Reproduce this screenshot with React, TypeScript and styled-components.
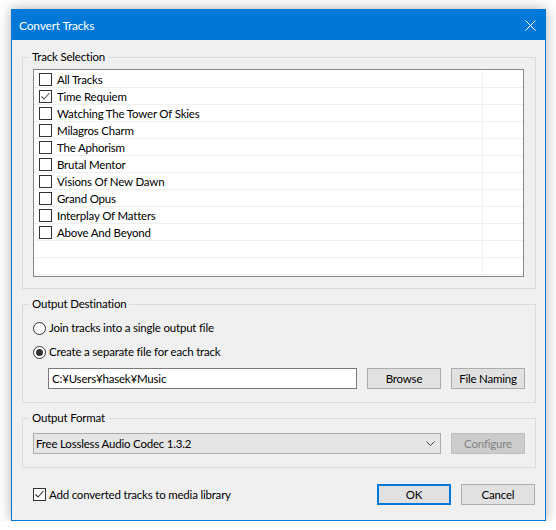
import React from 'react';
import styled, { createGlobalStyle } from 'styled-components';

const GlobalStyle = createGlobalStyle`
  html, body { margin: 0; padding: 0; background: #ffffff; }
  body {
    font-family: Lato, "Noto Sans", "Liberation Sans", sans-serif;
    font-size: 11.5px;
    letter-spacing: -0.2px;
    color: #000;
  }
  * { box-sizing: border-box; }
`;

const Page = styled.div`
  padding: 9px 0 0 11px;
`;

const Window = styled.div`
  width: 535px;
  height: 512px;
  border: 1px solid #0078d7;
  background: #f0f0f0;
  box-shadow: 0 0 12px rgba(0, 0, 0, 0.32);
  display: flex;
  flex-direction: column;
`;

const TitleBar = styled.div`
  height: 30px;
  background: #0078d7;
  color: #fff;
  display: flex;
  align-items: center;
  justify-content: space-between;
  padding: 1px 9px 0 7px;
  font-size: 12px;
`;

const Content = styled.div`
  display: flex;
  flex-direction: column;
  padding: 0 9px 0 10px;
`;

const Group = styled.div<{ $mt: number; $pad: string }>`
  position: relative;
  margin-top: ${(p) => p.$mt}px;
  border: 1px solid #dcdcdc;
  padding: ${(p) => p.$pad};
`;

const Caption = styled.span`
  position: absolute;
  top: -9px;
  left: 6px;
  padding: 0 3px;
  background: #f0f0f0;
  line-height: 16px;
  white-space: nowrap;
`;

const ListBox = styled.div`
  height: 208px;
  border: 1px solid #828790;
  background: #fff;
  padding-top: 1px;
  overflow: hidden;
`;

const Row = styled.div`
  display: grid;
  grid-template-columns: 449px 1fr;
  height: 17px;
  border-bottom: 1px solid #f0f0f0;
`;

const NameCell = styled.div`
  display: flex;
  align-items: center;
  gap: 5px;
  padding-left: 5px;
  border-right: 1px solid #f0f0f0;
  line-height: 16px;
  white-space: nowrap;
`;

const RowText = styled.span`
  padding-top: 1px;
`;

const Box = styled.span`
  width: 13px;
  height: 13px;
  flex: none;
  border: 1px solid #333;
  background: #fff;
  display: inline-flex;
  align-items: center;
  justify-content: center;
`;

const RadioRow = styled.label`
  display: flex;
  align-items: center;
  gap: 3px;
  height: 24px;
  line-height: 16px;
`;

const RadioCircle = styled.span<{ $on?: boolean }>`
  width: 13px;
  height: 13px;
  flex: none;
  border: 1px solid #333;
  border-radius: 50%;
  background: #fff;
  display: inline-flex;
  align-items: center;
  justify-content: center;
  &::after {
    content: '';
    width: 7px;
    height: 7px;
    border-radius: 50%;
    background: ${(p) => (p.$on ? '#333' : 'transparent')};
  }
`;

const PathRow = styled.div`
  display: flex;
  align-items: center;
  margin-top: 4px;
  padding-left: 15px;
  gap: 10px;
`;

const PathField = styled.div`
  width: 309px;
  height: 21px;
  border: 1px solid #7a7a7a;
  background: #fff;
  padding-left: 3px;
  display: flex;
  align-items: center;
  line-height: 16px;
`;

const Button = styled.div<{ $w?: number; $default?: boolean; $disabled?: boolean }>`
  width: ${(p) => p.$w ?? 74}px;
  height: 21px;
  flex: none;
  display: flex;
  align-items: center;
  justify-content: center;
  background: ${(p) => (p.$disabled ? '#cccccc' : '#e1e1e1')};
  border: ${(p) => (p.$default ? '2px solid #0078d7' : p.$disabled ? '1px solid #bfbfbf' : '1px solid #adadad')};
  color: ${(p) => (p.$disabled ? '#838383' : '#000')};
  line-height: 16px;
`;

const FormatRow = styled.div`
  display: flex;
  align-items: center;
  gap: 10px;
`;

const Select = styled.div`
  width: 408px;
  height: 21px;
  border: 1px solid #adadad;
  background: #e5e5e5;
  display: flex;
  align-items: center;
  justify-content: space-between;
  padding: 0 5px 0 2px;
  line-height: 16px;
`;

const BottomRow = styled.div`
  display: flex;
  align-items: center;
  margin-top: 16px;
  padding: 0 1px 0 11px;
  gap: 10px;
`;

const CheckLabel = styled.label`
  display: flex;
  align-items: center;
  gap: 3px;
  flex: 1;
  line-height: 16px;
`;

const Check = ({ on, color = '#555' }: { on?: boolean; color?: string }) => (
  <Box>
    {on && (
      <svg width="11" height="11" viewBox="0 0 11 11">
        <polyline points="1.5,5.5 4,8 9.5,2" fill="none" stroke={color} strokeWidth="1.1" />
      </svg>
    )}
  </Box>
);

const tracks = [
  'All Tracks',
  'Time Requiem',
  'Watching The Tower Of Skies',
  'Milagros Charm',
  'The Aphorism',
  'Brutal Mentor',
  'Visions Of New Dawn',
  'Grand Opus',
  'Interplay Of Matters',
  'Above And Beyond',
];

export default function App() {
  const rows = [...tracks, '', ''];
  return (
    <>
      <GlobalStyle />
      <Page>
        <Window>
          <TitleBar>
            <span>Convert Tracks</span>
            <svg width="11" height="11" viewBox="0 0 11 11">
              <path d="M0.5 0.5 L10.5 10.5 M10.5 0.5 L0.5 10.5" stroke="#fff" strokeWidth="1" />
            </svg>
          </TitleBar>
          <Content>
            <Group $mt={17} $pad="11px 11px 11px 10px">
              <Caption>Track Selection</Caption>
              <ListBox>
                {rows.map((t, i) => (
                  <Row key={i}>
                    <NameCell>
                      {t && <Check on={i === 1} />}
                      {t && <RowText>{t}</RowText>}
                    </NameCell>
                    <div />
                  </Row>
                ))}
              </ListBox>
            </Group>

            <Group $mt={15} $pad="11px 10px 13px 10px">
              <Caption>Output Destination</Caption>
              <RadioRow>
                <RadioCircle />
                <span>Join tracks into a single output file</span>
              </RadioRow>
              <RadioRow>
                <RadioCircle $on />
                <span>Create a separate file for each track</span>
              </RadioRow>
              <PathRow>
                <PathField>C:¥Users¥hasek¥Music</PathField>
                <Button>Browse</Button>
                <Button>File Naming</Button>
              </PathRow>
            </Group>

            <Group $mt={15} $pad="14px 10px 13px 10px">
              <Caption>Output Format</Caption>
              <FormatRow>
                <Select>
                  <span>Free Lossless Audio Codec 1.3.2</span>
                  <svg width="9" height="5" viewBox="0 0 9 5">
                    <polyline points="0.5,0.5 4.5,4.5 8.5,0.5" fill="none" stroke="#444" strokeWidth="1" />
                  </svg>
                </Select>
                <Button $disabled>Configure</Button>
              </FormatRow>
            </Group>

            <BottomRow>
              <CheckLabel>
                <Check on color="#333" />
                <span>Add converted tracks to media library</span>
              </CheckLabel>
              <Button $default>OK</Button>
              <Button>Cancel</Button>
            </BottomRow>
          </Content>
        </Window>
      </Page>
    </>
  );
}
